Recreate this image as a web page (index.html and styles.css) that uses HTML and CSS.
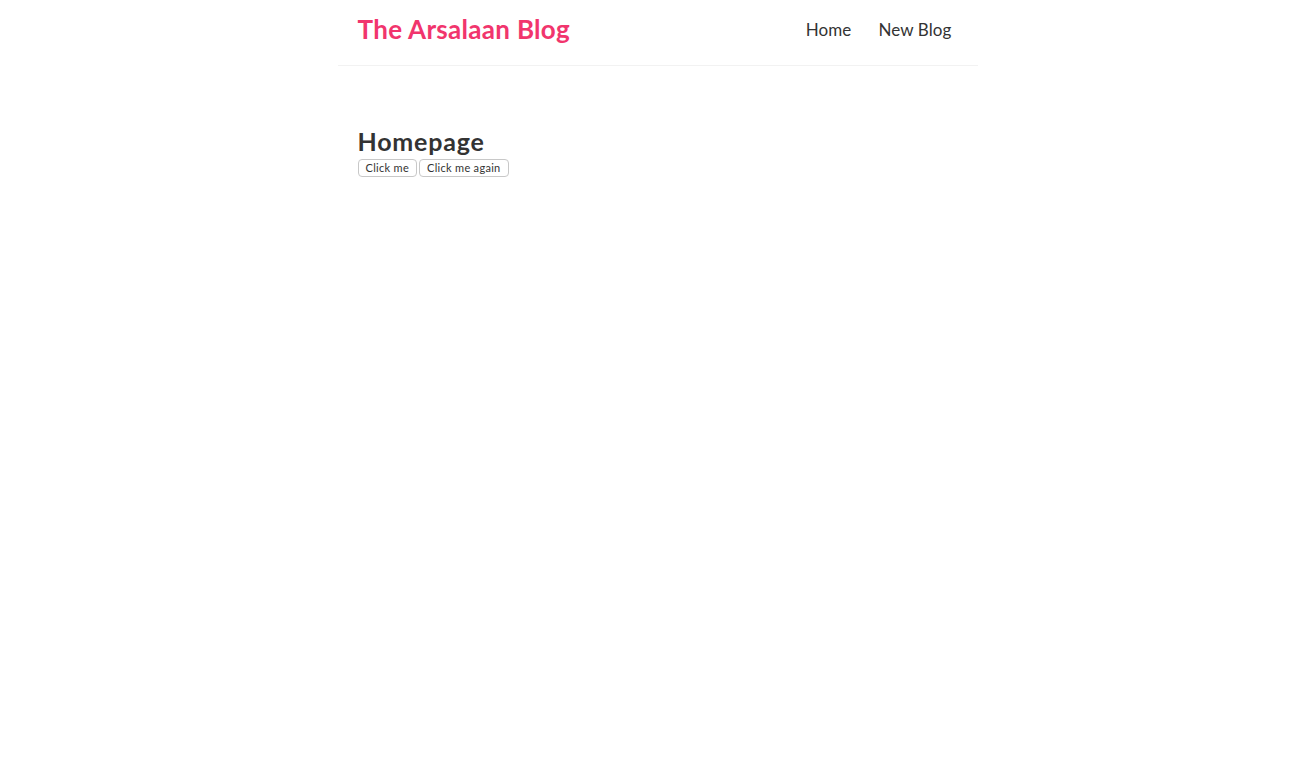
FILE: index.html
```html
<!DOCTYPE html>
<html>
<head>
<meta charset="utf-8">
<link rel="stylesheet" href="styles.css">
</head>
<body>
<div class="app">
  <nav class="navbar">
    <h1 class="brand">The Arsalaan Blog</h1>
    <div class="links">
      <a href="#">Home</a>
      <a href="#">New Blog</a>
    </div>
  </nav>
  <div class="content">
    <h2 class="page-title">Homepage</h2>
    <div class="buttons">
      <button class="btn">Click me</button>
      <button class="btn">Click me again</button>
    </div>
  </div>
</div>
</body>
</html>
```

FILE: styles.css
```css
* {
  margin: 0;
  box-sizing: content-box;
}
body {
  margin: 0;
  background: #fff;
  font-family: "Lato", "Open Sans", sans-serif;
  color: #333;
}
.navbar {
  padding: 17px 20px 23px;
  display: flex;
  align-items: center;
  max-width: 600px;
  margin: 0 auto;
  border-bottom: 1px solid #f2f2f2;
  height: 25px;
}
.brand {
  color: #f1356d;
  font-size: 26px;
  font-weight: 700;
  line-height: 25px;
  letter-spacing: 0.3px;
}
.links {
  margin-left: auto;
  display: flex;
  gap: 15px;
}
.links a {
  color: #333;
  text-decoration: none;
  padding: 6px;
  font-size: 17px;
  font-weight: 400;
  letter-spacing: 0.1px;
}
.content {
  max-width: 600px;
  margin: 40px auto;
  padding: 20px;
}
.page-title {
  font-size: 25px;
  font-weight: 700;
  line-height: 30px;
  letter-spacing: 0.8px;
  color: #333;
}
.buttons {
  display: flex;
  gap: 2px;
  margin-top: 3px;
}
.btn {
  font-family: "Lato", "Open Sans", sans-serif;
  font-size: 11px;
  color: #333;
  background: #fff;
  border: 1px solid #c8c8c8;
  border-radius: 4px;
  padding: 0 7px;
  height: 18px;
  line-height: 16px;
  letter-spacing: 0.3px;
  box-sizing: border-box;
}
```
